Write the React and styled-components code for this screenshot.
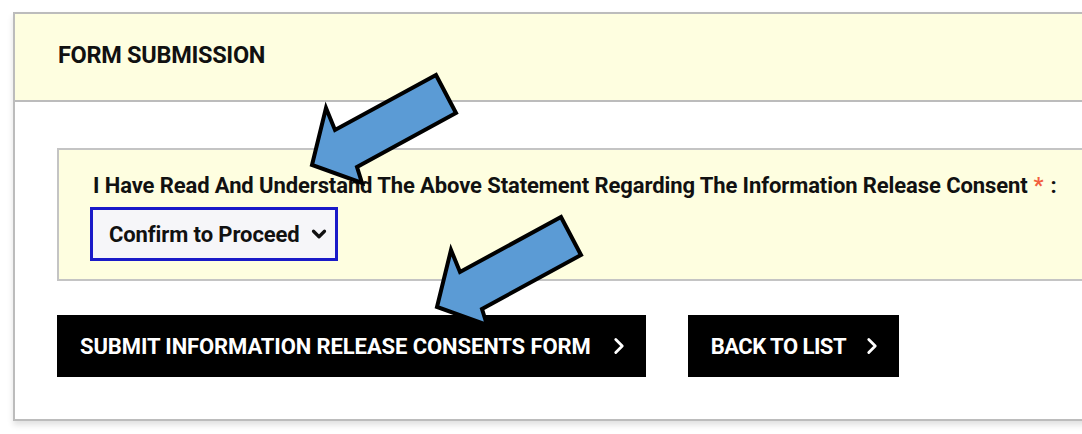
import React from 'react'
import styled, { createGlobalStyle } from 'styled-components'
import { ChevronRight, ChevronDown } from 'lucide-react'

const GlobalStyle = createGlobalStyle`
  html, body {
    margin: 0;
    padding: 0;
    background: #fff;
    overflow: hidden;
  }
  body {
    font-family: Roboto, "Liberation Sans", Arial, sans-serif;
    color: #111;
  }
`

const Page = styled.div`
  position: relative;
  width: 1082px;
  height: 434px;
  padding: 12px 0 0 13px;
  box-sizing: border-box;
`

const Card = styled.section`
  width: 1120px;
  border: 2px solid #bcbcbc;
  border-right: none;
  background: #fff;
  box-shadow: 0 4px 6px rgba(0, 0, 0, 0.12);
  box-sizing: border-box;
`

const CardHeader = styled.header`
  height: 88px;
  display: flex;
  align-items: center;
  padding: 0 0 5px 43px;
  box-sizing: border-box;
  background: #fefee0;
  border-bottom: 2px solid #bcbcbc;
`

const Title = styled.h2`
  margin: 0;
  font-size: 23.5px;
  font-weight: 700;
  letter-spacing: -0.3px;
  color: #111;
`

const CardBody = styled.div`
  padding: 46px 0 42px 42px;
`

const ConsentBox = styled.div`
  height: 133px;
  box-sizing: border-box;
  padding: 23px 0 0 34px;
  background: #fefee0;
  border: 2px solid #c4c4c4;
  border-right: none;
`

const Label = styled.label`
  display: block;
  font-size: 22px;
  line-height: 26px;
  font-weight: 700;
  color: #111;
  letter-spacing: -0.1px;
`

const Required = styled.span`
  color: #f2603f;
  font-size: 22px;
  margin: 0 7px 0 6px;
`

const SelectWrap = styled.div`
  display: inline-flex;
  align-items: center;
  gap: 8px;
  margin: 8px 0 0 -3px;
  width: 248px;
  height: 54px;
  box-sizing: border-box;
  padding: 0 0 0 16px;
  background: #f6f6f9;
  border: 3px solid #1a1ac8;
  font-size: 22px;
  font-weight: 700;
  letter-spacing: -0.1px;
  white-space: nowrap;
  color: #111;
`

const Actions = styled.div`
  display: flex;
  gap: 42px;
  margin-top: 34px;
`

const ActionButton = styled.button`
  display: flex;
  align-items: center;
  gap: ${(p) => p.$gap}px;
  height: 62px;
  padding: 0 14px 0 23px;
  background: #000;
  color: #fff;
  border: none;
  font-family: inherit;
  font-size: 22px;
  font-weight: 700;
  letter-spacing: ${(p) => p.$spacing}px;
  white-space: nowrap;
  cursor: pointer;
`

const Arrow = styled.svg`
  position: absolute;
  left: ${(p) => p.$x}px;
  top: ${(p) => p.$y}px;
  overflow: visible;
`

const BlueArrow = ({ x, y }) => (
  <Arrow $x={x} $y={y} width="150" height="115" viewBox="0 0 150 115">
    <polygon
      points="3,90 17,33 26,55 127,0 147,38 48,92 53,108"
      fill="#5b9bd5"
      stroke="#000"
      strokeWidth="4"
      strokeLinejoin="miter"
    />
  </Arrow>
)

export default function App() {
  return (
    <>
      <GlobalStyle />
      <Page>
        <Card>
          <CardHeader>
            <Title>FORM SUBMISSION</Title>
          </CardHeader>
          <CardBody>
            <ConsentBox>
              <Label>
                I Have Read And Understand The Above Statement Regarding The Information Release Consent
                <Required>*</Required>:
              </Label>
              <SelectWrap>
                Confirm to Proceed
                <ChevronDown size={22} strokeWidth={3.5} />
              </SelectWrap>
            </ConsentBox>
            <Actions>
              <ActionButton $gap={15} $spacing={-0.1}>
                SUBMIT INFORMATION RELEASE CONSENTS FORM
                <ChevronRight size={26} strokeWidth={2.6} />
              </ActionButton>
              <ActionButton $gap={13} $spacing={-0.5}>
                BACK TO LIST
                <ChevronRight size={26} strokeWidth={2.6} />
              </ActionButton>
            </Actions>
          </CardBody>
        </Card>
        <BlueArrow x={309} y={75} />
        <BlueArrow x={434} y={217} />
      </Page>
    </>
  )
}
